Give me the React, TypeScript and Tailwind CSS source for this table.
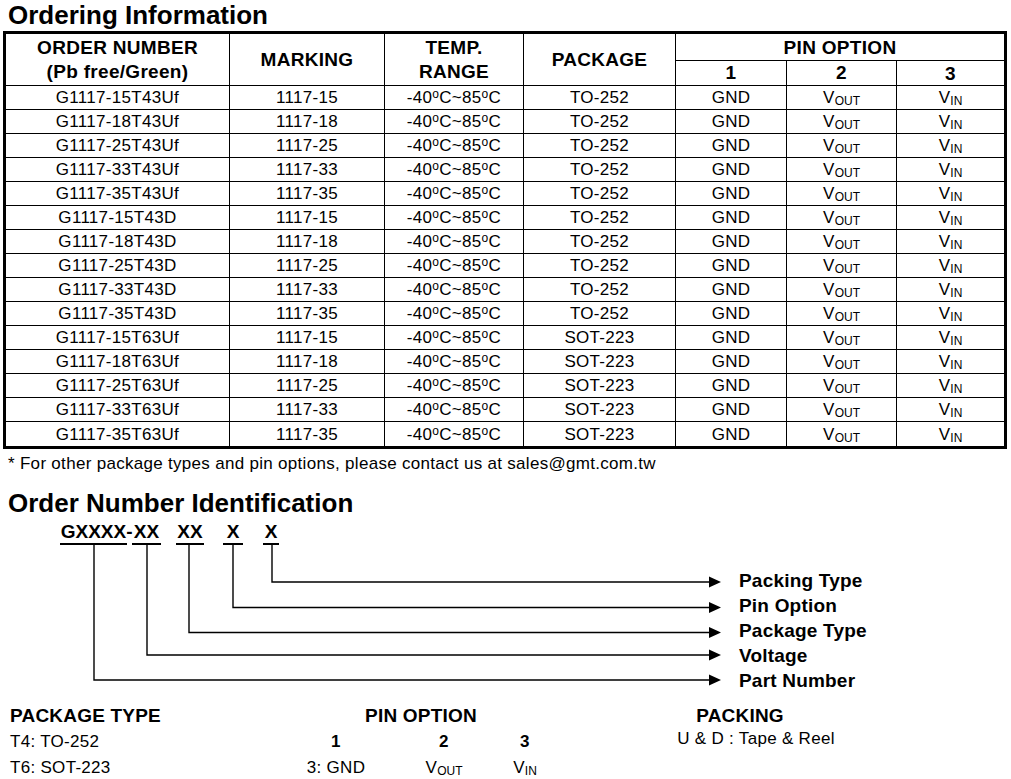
import React from "react";

const parts = [
  ["G1117-15T43Uf", "1117-15", "TO-252"],
  ["G1117-18T43Uf", "1117-18", "TO-252"],
  ["G1117-25T43Uf", "1117-25", "TO-252"],
  ["G1117-33T43Uf", "1117-33", "TO-252"],
  ["G1117-35T43Uf", "1117-35", "TO-252"],
  ["G1117-15T43D", "1117-15", "TO-252"],
  ["G1117-18T43D", "1117-18", "TO-252"],
  ["G1117-25T43D", "1117-25", "TO-252"],
  ["G1117-33T43D", "1117-33", "TO-252"],
  ["G1117-35T43D", "1117-35", "TO-252"],
  ["G1117-15T63Uf", "1117-15", "SOT-223"],
  ["G1117-18T63Uf", "1117-18", "SOT-223"],
  ["G1117-25T63Uf", "1117-25", "SOT-223"],
  ["G1117-33T63Uf", "1117-33", "SOT-223"],
  ["G1117-35T63Uf", "1117-35", "SOT-223"],
];

// lines of the order number diagram: x of the underline, y of the arrow
const legs = [
  { x: 272, y: 37 },
  { x: 233, y: 62.5 },
  { x: 189, y: 87.5 },
  { x: 147, y: 110 },
  { x: 94, y: 135 },
];

const labels = ["Packing Type", "Pin Option", "Package Type", "Voltage", "Part Number"];

const Sub = ({ base, sub }: { base: string; sub: string }) => (
  <span>
    {base}
    <span className="relative top-[2px] text-[12px] tracking-normal">{sub}</span>
  </span>
);

const Temp = () => (
  <span>
    -40<span className="relative -top-[5px] text-[12px]">o</span>C~85
    <span className="relative -top-[5px] text-[12px]">o</span>C
  </span>
);

export default function App() {
  const cell = "border-b border-r border-black p-0 text-center";
  const head = "border-b border-r border-black p-0 text-center font-bold text-[19px] tracking-[0.3px] leading-[24px]";

  return (
    <div className="w-[1011px] h-[779px] bg-white text-black font-['Liberation_Sans',Arial,sans-serif] overflow-hidden">
      <h1 className="pl-2 text-[26px] font-bold leading-[30px]">Ordering Information</h1>

      <table className="mt-px ml-[3px] w-[1004px] table-fixed border-separate border-spacing-0 border-[3px] border-black text-[17px] tracking-[0.3px] leading-none">
        <colgroup>
          <col className="w-[224px]" />
          <col className="w-[155px]" />
          <col className="w-[139px]" />
          <col className="w-[152px]" />
          <col className="w-[111px]" />
          <col className="w-[110px]" />
          <col className="w-[107px]" />
        </colgroup>
        <thead>
          <tr className="h-[27px]">
            <th rowSpan={2} className={head}>
              ORDER NUMBER
              <br />
              (Pb free/Green)
            </th>
            <th rowSpan={2} className={head}>MARKING</th>
            <th rowSpan={2} className={head}>
              TEMP.
              <br />
              RANGE
            </th>
            <th rowSpan={2} className={head}>PACKAGE</th>
            <th colSpan={3} className="border-b border-black p-0 text-center font-bold text-[19px] tracking-[0.3px]">
              PIN OPTION
            </th>
          </tr>
          <tr className="h-[24px]">
            <th className={head}>1</th>
            <th className={head}>2</th>
            <th className="border-b border-black p-0 text-center font-bold text-[19px]">3</th>
          </tr>
        </thead>
        <tbody>
          {parts.map(([num, mark, pkg], i) => {
            const last = i === parts.length - 1;
            const c = last ? "border-r border-black p-0 text-center" : cell;
            const e = last ? "p-0 text-center" : "border-b border-black p-0 text-center";
            return (
              <tr key={num} className="h-[24px]">
                <td className={c}>{num}</td>
                <td className={c}>{mark}</td>
                <td className={c}>
                  <Temp />
                </td>
                <td className={c}>{pkg}</td>
                <td className={c}>GND</td>
                <td className={c}>
                  <Sub base="V" sub="OUT" />
                </td>
                <td className={e}>
                  <Sub base="V" sub="IN" />
                </td>
              </tr>
            );
          })}
        </tbody>
      </table>

      <p className="mt-[4px] pl-[8px] text-[17px] tracking-[0.3px] leading-[22px]">
        * For other package types and pin options, please contact us at sales@gmt.com.tw
      </p>

      <h2 className="mt-[13px] pl-2 text-[26px] font-bold leading-[30px]">Order Number Identification</h2>

      {/* part number code with underlined groups */}
      <div className="mt-[3px] flex pl-[60px] text-[19px] font-bold leading-[22px]">
        <span className="w-[67px] border-b-2 border-black text-center">GXXXX</span>
        <span className="flex w-[5px] justify-center">-</span>
        <span className="w-[29px] border-b-2 border-black text-center">XX</span>
        <span className="ml-[15px] w-[28px] border-b-2 border-black text-center">XX</span>
        <span className="ml-[19px] w-[20px] border-b-2 border-black text-center">X</span>
        <span className="ml-[20px] w-[16px] border-b-2 border-black text-center">X</span>
      </div>

      <div className="flex">
        <svg width="725" height="142" className="shrink-0">
          {legs.map((l) => (
            <g key={l.x}>
              <polyline
                points={`${l.x},0 ${l.x},${l.y} 710,${l.y}`}
                fill="none"
                stroke="#000"
                strokeWidth="1.4"
              />
              <polygon points={`709,${l.y - 5.5} 721,${l.y} 709,${l.y + 5.5}`} fill="#000" />
            </g>
          ))}
        </svg>
        <div className="ml-[14px] flex flex-col pt-[23px] text-[19px] font-bold leading-[25px] tracking-[0.2px]">
          {labels.map((t) => (
            <span key={t}>{t}</span>
          ))}
        </div>
      </div>

      <div className="mt-[10px] flex">
        <div className="flex w-[286px] flex-col pl-[10px] text-[17px] leading-[26px] tracking-[0.3px]">
          <span className="text-[19px] font-bold tracking-[0.2px]">PACKAGE TYPE</span>
          <span>T4: TO-252</span>
          <span>T6: SOT-223</span>
        </div>

        <div className="flex w-[262px] flex-col text-[17px] leading-[26px] tracking-[0.3px]">
          <span className="pl-[8px] text-center text-[19px] font-bold tracking-[0.2px]">PIN OPTION</span>
          <div className="grid grid-cols-[100px_116px_46px] text-center">
            <span className="font-bold">1</span>
            <span className="font-bold">2</span>
            <span className="font-bold">3</span>
            <span>3: GND</span>
            <span>
              <Sub base="V" sub="OUT" />
            </span>
            <span>
              <Sub base="V" sub="IN" />
            </span>
          </div>
        </div>

        <div className="ml-[113px] flex w-[190px] flex-col text-center text-[17px] tracking-[0.3px]">
          <span className="pr-[32px] text-[19px] font-bold leading-[26px] tracking-[0.2px]">PACKING</span>
          <span className="leading-[20px]">U &amp; D : Tape &amp; Reel</span>
        </div>
      </div>
    </div>
  );
}
